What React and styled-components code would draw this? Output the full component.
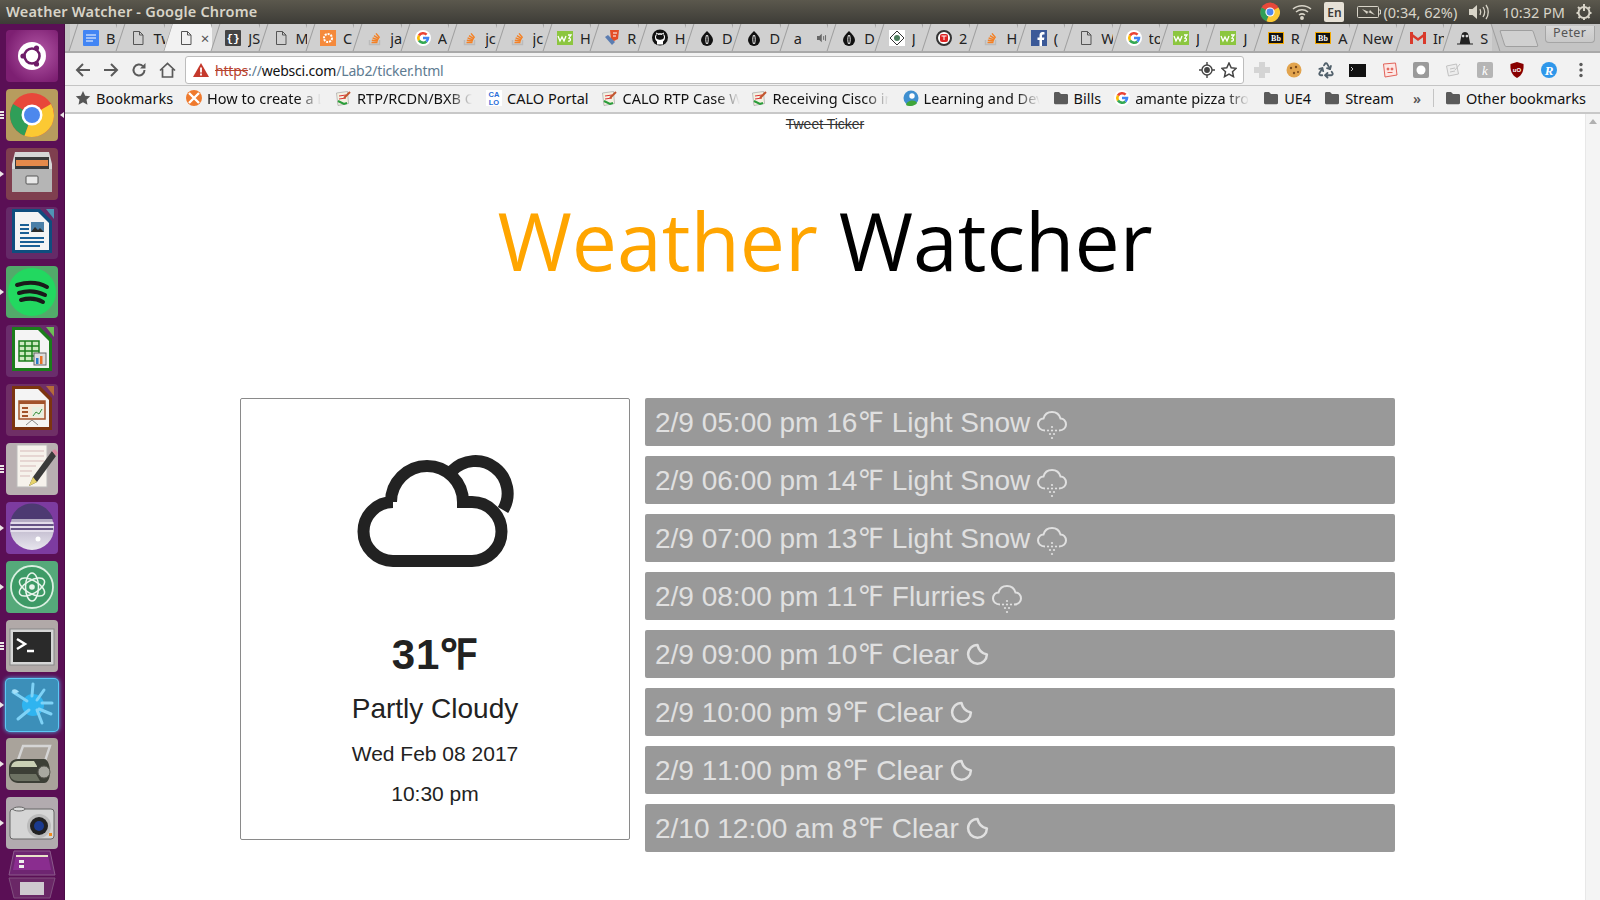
import React from 'react'
import styled, { createGlobalStyle, css } from 'styled-components'
import { Recycle } from 'lucide-react'

const GlobalStyle = createGlobalStyle`
  html, body { margin: 0; padding: 0; height: 100%; overflow: hidden; background: #fff; }
  #root { height: 100%; }
`

const Screen = styled.div`
  width: 1600px;
  height: 900px;
  display: flex;
  flex-direction: column;
  overflow: hidden;
  font-family: "Noto Sans", "Open Sans", sans-serif;
`

const TopBar = styled.div`
  height: 24px;
  flex: none;
  display: flex;
  align-items: center;
  justify-content: space-between;
  background: linear-gradient(#5b584d, #3d3c37);
  color: #d8d4c8;
  padding: 0 0 0 6px;
`

const WindowTitle = styled.div`
  font-size: 14.5px;
  font-weight: 600;
  letter-spacing: 0.2px;
  margin-top: -2px;
`

const Indicators = styled.div`
  display: flex;
  align-items: center;
  height: 24px;
  font-size: 14.5px;
  color: #d8d4c8;
`

const Indicator = styled.div`
  display: flex;
  align-items: center;
  justify-content: center;
  margin-left: ${p => p.$gap || 0}px;
  width: ${p => (p.$w ? p.$w + 'px' : 'auto')};
`

const LangBox = styled.div`
  width: 20px;
  height: 20px;
  background: #e6e1d6;
  color: #3c3b37;
  border-radius: 2px;
  font-size: 12px;
  font-weight: 600;
  display: flex;
  align-items: center;
  justify-content: center;
`

const Body = styled.div`
  flex: 1;
  display: flex;
  min-height: 0;
`

const Launcher = styled.div`
  width: 65px;
  flex: none;
  height: 876px;
  overflow: hidden;
  background: #5a0f55;
  border-right: 1px solid #4a0c46;
  box-sizing: border-box;
  padding: 6px 0 0 6px;
  display: flex;
  flex-direction: column;
  gap: 7px;
`

const Tile = styled.div`
  position: relative;
  width: 52px;
  height: 52px;
  flex: none;
  border-radius: 4px;
  background: ${p => p.$bg || 'transparent'};
  margin-top: ${p => (p.$lift ? '-6px' : '0')};
  ${p =>
    p.$glow &&
    css`
      box-shadow: 0 0 0 1px #5cc8f5, 0 0 4px 1px #4fb8ea;
    `}
  svg { display: block; }
`

const Pip = styled.span`
  position: absolute;
  left: -6px;
  top: 50%;
  width: 0;
  height: 0;
  margin-top: -3px;
  border-top: 3px solid transparent;
  border-bottom: 3px solid transparent;
  border-left: 4px solid #ece6e6;
`

const PipStack = styled.span`
  position: absolute;
  left: -6px;
  top: 50%;
  width: 4px;
  height: 8px;
  margin-top: -4px;
  background: repeating-linear-gradient(#ece6e6 0 2px, transparent 2px 3px);
`

const ActiveArrow = styled.span`
  position: absolute;
  right: -6px;
  top: 50%;
  width: 0;
  height: 0;
  margin-top: -3px;
  border-top: 3px solid transparent;
  border-bottom: 3px solid transparent;
  border-right: 4px solid #ece6e6;
`

const Browser = styled.div`
  flex: 1;
  min-width: 0;
  display: flex;
  flex-direction: column;
`

const TabStrip = styled.div`
  height: 29px;
  flex: none;
  display: flex;
  align-items: stretch;
  background: #c4c4c4;
  border-bottom: 2px solid #a9a9a9;
  box-sizing: border-box;
  padding-left: 5px;
  overflow: hidden;
`

const TabItem = styled.div`
  position: relative;
  width: 47.4px;
  flex: none;
  display: flex;
  align-items: center;
  gap: 7px;
  padding-left: 13px;
  box-sizing: border-box;
  background: #d0d0d0;
  overflow: visible;
  font-size: 14.5px;
  color: #222;
  white-space: nowrap;
  &::before, &::after {
    content: '';
    position: absolute;
    top: -2px;
    bottom: -2px;
    width: 1px;
    background: #9f9f9f;
  }
  &::before { left: 3px; transform: rotate(18deg); }
  &::after { right: -4px; transform: rotate(-18deg); }
`

const ActiveFill = styled.span`
  position: absolute;
  top: 0;
  bottom: -2px;
  left: -1px;
  right: -8px;
  background: #f2f2f2;
  clip-path: polygon(9px 0, calc(100% - 9px) 0, 100% 100%, 0 100%);
`

const TabLabel = styled.span`
  position: relative;
  width: ${p => p.$w || 16}px;
  overflow: hidden;
  flex: none;
`

const TabIcon = styled.span`
  position: relative;
  width: 16px;
  height: 16px;
  flex: none;
  display: flex;
  align-items: center;
  justify-content: center;
  font-size: 14px;
`

const CloseMark = styled.span`
  position: relative;
  font-size: 15px;
  color: #555;
`

const NewTab = styled.div`
  width: 32px;
  height: 15px;
  margin: 6px 0 0 10px;
  border: 1px solid #9f9f9f;
  border-radius: 2px;
  background: #d0d0d0;
  transform: skewX(18deg);
`

const ProfileButton = styled.div`
  margin: 2px 0 0 9px;
  width: 48px;
  height: 16px;
  border: 1px solid #a5a5a5;
  border-top: none;
  border-radius: 0 0 4px 4px;
  background: linear-gradient(#d8d8d8, #c8c8c8);
  font-size: 12.5px;
  letter-spacing: 0.4px;
  color: #555;
  text-align: center;
  line-height: 14px;
`

const Toolbar = styled.div`
  height: 32px;
  flex: none;
  display: flex;
  align-items: center;
  background: #f2f2f2;
  box-sizing: border-box;
  padding: 2px 0 0 4px;
`

const NavButton = styled.div`
  width: 28px;
  height: 28px;
  display: flex;
  align-items: center;
  justify-content: center;
`

const Omnibox = styled.div`
  width: 1059px;
  height: 28px;
  margin-left: 4px;
  box-sizing: border-box;
  flex: none;
  display: flex;
  align-items: center;
  background: #fff;
  border: 1px solid #bdbdbd;
  border-radius: 3px;
  padding: 0 3px 0 7px;
`

const UrlText = styled.div`
  flex: 1;
  margin-left: 6px;
  font-size: 14px;
  letter-spacing: -0.2px;
  color: #5e7b91;
  white-space: nowrap;
`

const Https = styled.span`
  color: #b8442f;
  text-decoration: line-through;
`

const Host = styled.span`
  color: #111;
`

const OmniIcon = styled.div`
  width: 22px;
  display: flex;
  justify-content: center;
`

const Extensions = styled.div`
  display: flex;
  margin-left: 2px;
`

const Extension = styled.div`
  width: 31.9px;
  height: 20px;
  flex: none;
  display: flex;
  align-items: center;
  justify-content: center;
`

const BookmarkBar = styled.div`
  height: 29px;
  flex: none;
  display: flex;
  align-items: center;
  background: #f1f1f1;
  border-top: 1px solid #c4c4c4;
  border-bottom: 2px solid #c8c8c8;
  box-sizing: border-box;
  padding: 0 0 2px 10px;
  font-size: 14.5px;
  color: #111;
  white-space: nowrap;
`

const Bookmark = styled.div`
  display: flex;
  align-items: center;
  gap: 5px;
  flex: none;
  margin-right: ${p => p.$after}px;
`

const BookmarkText = styled.span`
  ${p =>
    p.$fade &&
    css`
      width: ${p.$fade}px;
      overflow: hidden;
      -webkit-mask-image: linear-gradient(to right, #000 80%, transparent);
      mask-image: linear-gradient(to right, #000 80%, transparent);
    `}
`

const BarSeparator = styled.span`
  width: 1px;
  height: 18px;
  background: #c4c4c4;
  margin-right: 11px;
  flex: none;
`

const Overflow = styled.span`
  font-size: 14px;
  font-weight: 600;
  color: #555;
  margin-right: 12px;
`

const Viewport = styled.div`
  flex: 1;
  min-height: 0;
  display: flex;
  background: #fff;
`

const Page = styled.div`
  flex: 1;
  min-width: 0;
  display: flex;
  flex-direction: column;
`

const Scrollbar = styled.div`
  width: 15px;
  flex: none;
  background: #f4f4f4;
  border-left: 1px solid #e8e8e8;
  box-sizing: border-box;
  display: flex;
  justify-content: center;
  padding-top: 5px;
`

const ScrollArrow = styled.div`
  width: 0;
  height: 0;
  border-left: 4px solid transparent;
  border-right: 4px solid transparent;
  border-bottom: 5px solid #b0b0b0;
`

const Ticker = styled.div`
  text-align: center;
  font-family: "Liberation Sans", Arial, sans-serif;
  font-size: 14px;
  line-height: 18px;
  color: #333;
  text-decoration: line-through;
  margin-top: 1px;
`

const Title = styled.h1`
  margin: 52px 0 0;
  text-align: center;
  font-family: "Open Sans", "Noto Sans", sans-serif;
  font-weight: 400;
  font-size: 80.5px;
  line-height: 110px;
  color: #000;
`

const Orange = styled.span`
  color: #ffa500;
`

const Content = styled.div`
  display: grid;
  grid-template-columns: 390px 750px;
  gap: 15px;
  margin: 103px 0 0 175px;
`

const Card = styled.div`
  height: 442px;
  box-sizing: border-box;
  border: 1px solid #8a8a8a;
  border-radius: 2px;
  padding-top: 55px;
  display: flex;
  flex-direction: column;
  align-items: center;
  font-family: "Liberation Sans", Arial, sans-serif;
  color: #222;
`

const Temperature = styled.div`
  margin-top: 63px;
  font-size: 42px;
  line-height: 48px;
  font-weight: 700;
  letter-spacing: 1px;
`

const Summary = styled.div`
  margin-top: 13px;
  font-size: 28px;
  line-height: 34px;
`

const CardLine = styled.div`
  margin-top: ${p => p.$top}px;
  font-size: 21px;
  line-height: 26px;
`

const Forecast = styled.div`
  display: flex;
  flex-direction: column;
  gap: 10px;
`

const ForecastRow = styled.div`
  height: 48px;
  box-sizing: border-box;
  padding-left: 10px;
  display: flex;
  align-items: center;
  gap: 7px;
  background: #999;
  border-radius: 2px;
  color: #e0e0e0;
  font-family: "Liberation Sans", "DejaVu Sans", Arial, sans-serif;
  font-size: 28px;
  font-kerning: none;
`

const RowIcon = styled.svg`
  flex: none;
  margin-top: ${p => p.$drop}px;
`

const CloudSun = () => (
  <svg width="157" height="114" viewBox="0 0 157 114" fill="none" stroke="#222" strokeWidth="12">
    <path d="M36 107 A29.5 29.5 0 0 1 36 48 H34 A36 36 0 0 1 106 48 H115 A29.5 29.5 0 0 1 115 107 Z" />
    <path d="M95 17 A32.3 32.3 0 0 1 146 56" />
  </svg>
)

const SnowIcon = () => (
  <RowIcon $drop={8} width="30" height="30" viewBox="0 0 30 30" fill="none" stroke="#e0e0e0" strokeWidth="2">
    <path d="M8 19.500 C3.500 19.500 1 16.500 1 13.500 C1 10 3.500 7.500 6.500 7.500 C7.500 3.500 11 1 15 1 C19.500 1 22.500 4 23.500 7.500 C26.500 7.500 29 10 29 13.500 C29 16.500 26.500 19.500 22 19.500" />
    <g fill="#e0e0e0" stroke="none">
      {[[15, 16], [11, 19.5], [15, 19.5], [19, 19.5], [13, 23], [17, 23], [15, 27]].map(([x, y], i) => (
        <circle key={i} cx={x} cy={y} r="1.1" />
      ))}
    </g>
  </RowIcon>
)

const MoonIcon = () => (
  <RowIcon $drop={-2} width="23" height="23" viewBox="0 0 22 22" fill="none" stroke="#e0e0e0" strokeWidth="2.4">
    <path d="M11 2.800 A9 9 0 1 0 20 12 A12 12 0 0 1 11 2.800 Z" strokeLinejoin="round" />
  </RowIcon>
)

const forecast = [
  ['2/9 05:00 pm 16℉ Light Snow', 'snow'],
  ['2/9 06:00 pm 14℉ Light Snow', 'snow'],
  ['2/9 07:00 pm 13℉ Light Snow', 'snow'],
  ['2/9 08:00 pm 11℉ Flurries', 'snow'],
  ['2/9 09:00 pm 10℉ Clear', 'moon'],
  ['2/9 10:00 pm 9℉ Clear', 'moon'],
  ['2/9 11:00 pm 8℉ Clear', 'moon'],
  ['2/10 12:00 am 8℉ Clear', 'moon'],
]

/* favicons */
const Doc = ({ c = '#555' }) => (
  <svg width="14" height="16" viewBox="0 0 14 16" fill="none" stroke={c} strokeWidth="1">
    <path d="M2.5 1.5 H8.5 L12 5 V14.5 H2.5 Z M8.5 1.5 V5 H12" />
  </svg>
)
const Docs = () => (
  <svg width="16" height="16"><rect width="16" height="16" x="0" rx="1" fill="#4285f4" /><path d="M3 5h10M3 8h10M3 11h7" stroke="#fff" /></svg>
)
const Braces = () => (
  <svg width="16" height="16"><rect width="16" height="16" rx="1" fill="#444" /><text x="8" y="12" fontSize="11" fontWeight="700" textAnchor="middle" fill="#fff" fontFamily="Liberation Mono">{'{}'}</text></svg>
)
const Orangey = () => (
  <svg width="16" height="16"><rect width="16" height="16" fill="#f58a3c" /><circle cx="8" cy="8" r="4" fill="none" stroke="#fff" strokeWidth="2" strokeDasharray="2 1" /></svg>
)
const Stack = () => (
  <svg width="16" height="16" fill="none" stroke="#f48024" strokeWidth="1.4">
    <path d="M2.5 10v4.5h10V10" stroke="#bbb" />
    <path d="M4.5 12.5h6M4.8 10.2l6 .8M5.6 7.8l5.6 2.2M7 5.6l5 3.2M9 3.4l3.6 4.4" />
  </svg>
)
const Goog = () => (
  <svg width="16" height="16" viewBox="0 0 16 16" fill="none" strokeWidth="2.6">
    <circle cx="8" cy="8" r="8" fill="#fff" />
    <path d="M11.6 4.6A5 5 0 0 0 4 5.5" stroke="#ea4335" />
    <path d="M4 5.5a5 5 0 0 0 0 5" stroke="#fbbc05" />
    <path d="M4 10.5a5 5 0 0 0 7.4 1" stroke="#34a853" />
    <path d="M11.4 11.5A5 5 0 0 0 13 8H8" stroke="#4285f4" />
  </svg>
)
const W3 = () => (
  <svg width="17" height="14" viewBox="0 0 16 14"><rect width="16" height="14" fill="#8cc63f" /><path d="M1 5l2 5 2-4 2 4 2-5M11 4h3l-2 3c2 0 2 4-1 3" fill="none" stroke="#fff" strokeWidth="1.3" /></svg>
)
const Html5 = () => (
  <svg width="16" height="16"><path d="M6 0h9l-1 9-4 2-3-1z" fill="#e44d26" /><path d="M9 3h4M9 6h3" stroke="#fff" /><path d="M1 7l3-2 7 7-3 3z" fill="#5b7db1" /></svg>
)
const Github = () => (
  <svg width="17" height="17" viewBox="0 0 16 16"><circle cx="8" cy="8" r="8" fill="#111" /><path d="M5 15v-3c-1-1-2-2-2-4 0-1 0-2 1-3V3l2 1c1-.3 3-.3 4 0l2-1v2c1 1 1 2 1 3 0 2-1 3-2 4v3z" fill="#fff" /><path d="M4.5 4l2 1.4c1-.3 2-.3 3 0L11.500 4v2c.8 1 .6 2.700-.4 3.500-.8.600-2 .7-3.100.7s-2.300-.1-3.100-.7c-1-.8-1.200-2.500-.4-3.500z" fill="#111" /></svg>
)
const Egg = () => (
  <svg width="14" height="16" viewBox="0 0 14 16"><path d="M7 1 C10 4 13 7 13 10 A6 6 0 0 1 1 10 C1 7 4 4 7 1 Z" fill="#111" /><path d="M6.500 5 C5.500 8 5.500 11 6.500 14 M7.500 5 C8.500 8 8.500 11 7.500 14" stroke="#fff" strokeWidth="0.9" fill="none" /></svg>
)
const Speaker = () => (
  <svg width="12" height="10" viewBox="0 0 12 10" fill="#666"><path d="M0 3h2.500L5 .5v9L2.500 7H0z" /><path d="M7 3v4M9 2v6" stroke="#666" fill="none" /></svg>
)
const Diamond = () => (
  <svg width="16" height="16"><rect width="16" height="16" fill="#fff" /><path d="M8 1l7 7-7 7-7-7z" fill="none" stroke="#333" /><circle cx="8" cy="8" r="3" fill="#4d7f5f" /></svg>
)
const TT = () => (
  <svg width="16" height="16"><circle cx="8" cy="8" r="7" fill="#fff" stroke="#333" strokeWidth="2" /><rect x="4" y="4" width="8" height="8" rx="2" fill="#d22" /><path d="M5.500 6h5M8 6v4" stroke="#fff" /></svg>
)
const Fb = () => (
  <svg width="16" height="16"><rect width="16" height="16" fill="#3b5998" /><path d="M11 16V10h2l.4-2.500H11V6c0-1 .4-1.500 1.500-1.500h1V2.200C13 2 12 2 11.500 2 9.500 2 8.500 3.200 8.500 5.500v2h-2V10h2v6z" fill="#fff" /></svg>
)
const Bb = () => (
  <svg width="16" height="12"><rect width="16" height="12" fill="#f2a900" /><rect x="1" y="1" width="14" height="10" fill="#111" /><text x="8" y="9" fontSize="8" fontWeight="700" textAnchor="middle" fill="#fff" fontFamily="Liberation Serif">Bb</text></svg>
)
const Gmail = () => (
  <svg width="16" height="13" viewBox="0 0 16 13"><path d="M0 1h3v12H0zM13 1h3v12h-3z" fill="#d93a2b" /><path d="M0 1l8 6 8-6v3L8 10 0 4z" fill="#d93a2b" /></svg>
)
const Robot = () => (
  <svg width="17" height="15" viewBox="0 0 17 15"><path d="M3 14L5 4c1-3 6-3 7 0l2 10h3v1H0v-1z" fill="#222" /><circle cx="6.500" cy="6" r="1.400" fill="#ddd" /><circle cx="10.500" cy="6" r="1.400" fill="#ddd" /></svg>
)

const tabs = [
  [Docs, 'B'], [Doc, 'Tw'], [Doc, '', true], [Braces, 'JS'], [Doc, 'M'], [Orangey, 'C'], [Stack, 'ja'], [Goog, 'A'],
  [Stack, 'jc'], [Stack, 'jc'], [W3, 'H'], [Html5, 'R'], [Github, 'H'], [Egg, 'D'], [Egg, 'D'], [null, 'a'],
  [Egg, 'D'], [Diamond, 'J'], [TT, '2'], [Stack, 'H'], [Fb, '('], [Doc, 'W'], [Goog, 'to'], [W3, 'J'], [W3, 'J'],
  [Bb, 'R'], [Bb, 'A'], [null, 'New'], [Gmail, 'In'], [Robot, 'S'],
]

/* bookmark icons */
const Star = ({ c = '#555', hollow }) => (
  <svg width="16" height="16" viewBox="0 0 16 16" fill={hollow ? 'none' : c} stroke={c} strokeWidth={hollow ? 1.5 : 0}>
    <path d="M8 1l2.200 4.700 5 .6-3.700 3.400 1 5L8 12.200 3.500 14.700l1-5L.8 6.300l5-.6z" />
  </svg>
)
const Folder = () => (
  <svg width="16" height="14" viewBox="0 0 16 14" fill="#5a5a5a"><path d="M1 2.500C1 1.700 1.500 1 2.300 1H6l2 2h5.700c.8 0 1.300.6 1.300 1.300V12c0 .7-.5 1.200-1.300 1.200H2.300C1.500 13.200 1 12.700 1 12z" /></svg>
)
const Compass = () => (
  <svg width="16" height="16" viewBox="0 0 16 16"><circle cx="8" cy="8" r="8" fill="#ef7a2e" /><path d="M3 3l10 10M13 3L3 13" stroke="#fff" strokeWidth="2.400" /></svg>
)
const Checklist = () => (
  <svg width="17" height="17" viewBox="0 0 17 17"><path d="M1.500 3l11-1.500 1 12-10.500 2z" fill="#f4f1e2" stroke="#999" strokeWidth=".6" /><path d="M4 6l7-1M4 9l7-1" stroke="#d33" /><path d="M3 11l6 3 3-1" stroke="#2a9d3a" strokeWidth="2" fill="none" /><path d="M9 8l6-6" stroke="#c2552d" strokeWidth="2" /></svg>
)
const Calo = () => (
  <svg width="16" height="16"><rect width="16" height="16" fill="#fff" /><text x="8" y="7" fontSize="7.500" fontWeight="700" textAnchor="middle" fill="#2a6dd8" fontFamily="Liberation Sans">CA</text><text x="8" y="15" fontSize="7.500" fontWeight="700" textAnchor="middle" fill="#2a6dd8" fontFamily="Liberation Sans">LO</text></svg>
)
const Learn = () => (
  <svg width="16" height="16" viewBox="0 0 16 16"><circle cx="8" cy="8" r="7.500" fill="#3f8fd0" /><circle cx="9" cy="6" r="2.700" fill="#fff" /><path d="M3 15c1-5 9-6 11-2-2 3-8 4-11 2z" fill="#3fa53a" /></svg>
)

const bookmarks = [
  { icon: <Star />, label: 'Bookmarks', after: 13 },
  { icon: <Compass />, label: 'How to create a Link', fade: 114, after: 14 },
  { icon: <Checklist />, label: 'RTP/RCDN/BXB Cisco', fade: 115, after: 14 },
  { icon: <Calo />, label: 'CALO Portal', after: 12 },
  { icon: <Checklist />, label: 'CALO RTP Case Work', fade: 117, after: 11 },
  { icon: <Checklist />, label: 'Receiving Cisco in', fade: 116, after: 14 },
  { icon: <Learn />, label: 'Learning and Development', fade: 116, after: 13 },
  { icon: <Folder />, label: 'Bills', after: 13 },
  { icon: <Goog />, label: 'amante pizza troy', fade: 114, after: 14 },
  { icon: <Folder />, label: 'UE4', after: 13 },
  { icon: <Folder />, label: 'Stream', after: 19 },
]

/* toolbar */
const Back = ({ flip }) => (
  <svg width="16" height="16" viewBox="0 0 16 16" fill="none" stroke="#5a5a5a" strokeWidth="2" style={flip ? { transform: 'scaleX(-1)' } : undefined}>
    <path d="M15 8H2M8 2L2 8l6 6" />
  </svg>
)
const Reload = () => (
  <svg width="16" height="16" viewBox="0 0 16 16" fill="none" stroke="#5a5a5a" strokeWidth="2">
    <path d="M13.500 8a5.500 5.500 0 1 1-1.600-3.900" />
    <path d="M14.500 1v5.500H9" fill="#5a5a5a" stroke="none" />
  </svg>
)
const Home = () => (
  <svg width="17" height="16" viewBox="0 0 17 16" fill="none" stroke="#5a5a5a" strokeWidth="1.700">
    <path d="M1 8.500L8.500 1.500 16 8.500M3.500 7v8h10V7" />
  </svg>
)
const Warn = () => (
  <svg width="16" height="14" viewBox="0 0 16 14"><path d="M8 0l8 14H0z" fill="#c5392c" /><path d="M8 4.500v5M8 10.500v2" stroke="#fff" strokeWidth="1.800" /></svg>
)
const Target = () => (
  <svg width="16" height="16" viewBox="0 0 16 16" fill="none" stroke="#444" strokeWidth="1.400"><circle cx="8" cy="8" r="5" /><circle cx="8" cy="8" r="2.200" fill="#444" /><path d="M8 0v3M8 13v3M0 8h3M13 8h3" /></svg>
)

const extensions = [
  <svg width="16" height="16" key="a" fill="#d4d4d4"><path d="M5 0h6v5h5v6h-5v5H5v-5H0V5h5z" /></svg>,
  <svg width="16" height="16" key="b"><circle cx="8" cy="8" r="7.500" fill="#e2a44e" /><circle cx="5" cy="6" r="1.200" fill="#7a4a1c" /><circle cx="10" cy="5" r="1.200" fill="#7a4a1c" /><circle cx="8" cy="11" r="1.200" fill="#7a4a1c" /><circle cx="12" cy="10" r="1" fill="#7a4a1c" /></svg>,
  <Recycle key="c" size={18} color="#51606b" strokeWidth={2.4} />,
  <svg width="17" height="13" key="d"><rect width="17" height="13" fill="#111" /><path d="M2 3l2 2-2 2" stroke="#ccc" fill="none" /></svg>,
  <svg width="16" height="16" key="e" fill="#fde7e4" stroke="#e2635a"><path d="M1.500 2l12-1 1.500 12-12 2z" /><circle cx="6" cy="7" r="1" fill="#e2635a" /><circle cx="10" cy="7" r="1" fill="#e2635a" /><path d="M5.500 10.500h5" /></svg>,
  <svg width="16" height="16" key="f"><rect width="16" height="16" rx="2" fill="#9a9a9a" /><circle cx="8" cy="8" r="4.500" fill="#fff" /></svg>,
  <svg width="16" height="16" key="g" fill="#ededed" stroke="#c2c2c2"><path d="M1.500 4l10-2 2 10-10 2z" /><path d="M5 7l5-1M5 10l5-1M10 8l5-6" /></svg>,
  <svg width="16" height="16" key="h"><rect width="16" height="16" rx="2" fill="#b5b5b5" /><text x="8" y="13" fontSize="13" fontStyle="italic" textAnchor="middle" fill="#fff" fontFamily="Liberation Serif">k</text></svg>,
  <svg width="16" height="16" key="i"><path d="M1.500 2L8 0l6.500 2c.5 6-1 11-6.500 14C2.500 13 1 8 1.500 2z" fill="#800" /><text x="8" y="10" fontSize="6" fontWeight="700" textAnchor="middle" fill="#fff" fontFamily="Liberation Sans">uO</text></svg>,
  <svg width="16" height="16" key="j"><circle cx="8" cy="8" r="8" fill="#2f97ea" /><text x="8" y="13" fontSize="13" fontStyle="italic" fontWeight="700" textAnchor="middle" fill="#fff" fontFamily="Liberation Serif">R</text></svg>,
  <svg width="4" height="16" key="k" fill="#5a5a5a"><circle cx="2" cy="2.500" r="1.700" /><circle cx="2" cy="8" r="1.700" /><circle cx="2" cy="13.500" r="1.700" /></svg>,
]

/* launcher icons, all drawn in a 52 box */
const L = ({ children }) => <svg width="52" height="52" viewBox="0 0 52 52">{children}</svg>

const launcherIcons = [
  { bg: 'radial-gradient(circle at 60% 45%, #b55aa8, #7d1f72 75%)', icon: <L><circle cx="26" cy="26" r="14" fill="#fff" /><circle cx="26" cy="26" r="7.500" fill="none" stroke="#6e1c68" strokeWidth="2.600" /><circle cx="17" cy="26" r="2.600" fill="#6e1c68" /><circle cx="30.500" cy="18" r="2.600" fill="#6e1c68" /><circle cx="30.500" cy="34" r="2.600" fill="#6e1c68" /></L> },
  { bg: '#b79c5e', icon: <L><circle cx="26" cy="26" r="22" fill="#e8483a" /><path d="M26 26L7 15A22 22 0 0 0 18.500 46.700z" fill="#2f9e58" /><path d="M26 26L18.500 46.700A22 22 0 0 0 45 15z" fill="#fbc933" /><circle cx="26" cy="26" r="10.500" fill="#fff" /><circle cx="26" cy="26" r="8" fill="#4d88ed" /></L>, mark: 'stack', arrow: true },
  { bg: '#7f3f4f', icon: <L><path d="M9 4h34l3 12v28H6V16z" fill="#d6d6d6" /><rect x="9" y="9" width="34" height="14" fill="#3a3a3a" /><rect x="10" y="12" width="32" height="6" fill="#e58a4b" /><path d="M6 21h40v23H6z" fill="#b5b5b5" /><rect x="20" y="28" width="12" height="8" rx="1" fill="#e8e8e8" stroke="#555" /></L>, mark: 'pip' },
  { bg: '#652a68', icon: <L><path d="M6 2h28l12 12v32H6z" fill="#0f4d7e" /><path d="M40 2l8 0v10z" fill="#4f93b5" /><path d="M9 5h23l11 11v27H9z" fill="#f4f4f4" /><path d="M14 18h9M14 22h9M14 26h9M14 31h24M14 35h24M14 39h20" stroke="#1a5f95" strokeWidth="2" /><rect x="25" y="15" width="13" height="10" fill="#4a7fa8" /><path d="M25 25l4-5 3 3 2-2 4 4z" fill="#2c2c2c" /></L> },
  { bg: '#52aa6a', icon: <L><circle cx="26" cy="26" r="24" fill="#22d860" /><path d="M11 19c10-3 21-3 30 2M13 27c9-3 18-2 26 2M15 34c7-2 15-2 22 2" fill="none" stroke="#1a1a1a" strokeWidth="4" strokeLinecap="round" /></L>, mark: 'pip' },
  { bg: '#6a2d6c', icon: <L><path d="M6 2h28l12 12v32H6z" fill="#1b7d1b" /><path d="M40 2l8 0v10z" fill="#6cbf55" /><path d="M9 5h23l11 11v27H9z" fill="#f4f4f4" /><path d="M13 16h20v20H13zM13 21h20M13 26h20M13 31h20M19 16v20M26 16v20" fill="#cdeac0" stroke="#1b7d1b" strokeWidth="1.500" /><rect x="28" y="28" width="12" height="12" fill="#ddd" stroke="#666" /><rect x="30" y="33" width="2.500" height="6" fill="#2a7ac8" /><rect x="34" y="31" width="2.500" height="8" fill="#e5732a" /></L> },
  { bg: '#6f2f66', icon: <L><path d="M6 2h28l12 12v32H6z" fill="#7c3410" /><path d="M40 2l8 0v10z" fill="#b56a3a" /><path d="M9 5h23l11 11v27H9z" fill="#f4f4f4" /><rect x="13" y="17" width="26" height="18" fill="#f7e8d8" stroke="#a2522a" strokeWidth="1.500" /><rect x="13" y="17" width="26" height="3" fill="#a2522a" /><path d="M16 24h6M16 28h6M16 32h6" stroke="#a2522a" strokeWidth="2" /><rect x="26" y="23" width="11" height="10" fill="#e7efe0" /><path d="M27 32l3-4 3 2 3-5" stroke="#3a8f3a" fill="none" /><path d="M20 41l6-5 6 5" stroke="#888" fill="none" /></L> },
  { bg: '#b8afb1', icon: <L><rect x="11" y="2" width="30" height="42" fill="#f6f2ec" stroke="#bbb" /><path d="M14 8h24M14 13h24M14 18h24M14 23h16M14 28h12M14 33h10" stroke="#d6b9b9" /><path d="M46 8L27 34l-4 9 8-4L50 13z" fill="#3a3a3a" /><path d="M27 34l-4 9 8-4z" fill="#e6d26a" /><path d="M46 8l4 5 2-3-3-4z" fill="#d98aa0" /></L>, mark: 'stack' },
  { bg: '#7d3ba0', icon: <L><defs><linearGradient id="ecl" x1="0" y1="0" x2="0" y2="1"><stop offset="0" stopColor="#9a8fae" /><stop offset="1" stopColor="#e8e6ee" /></linearGradient></defs><circle cx="26" cy="26" r="22" fill="url(#ecl)" /><path d="M5 17h42a22 22 0 0 0-42 0z" fill="#4d3a72" /><path d="M4.500 21h43M4 25h44M4.500 29h43" stroke="#efeaf5" strokeWidth="1.600" /><path d="M4.500 23h43M5 27h42" stroke="#4a3570" strokeWidth="1.600" /><circle cx="32" cy="37" r="2.500" fill="#fff" /></L>, mark: 'pip' },
  { bg: '#55a97a', icon: <L><circle cx="26" cy="26" r="21" fill="#3d9a66" stroke="#d8efe0" strokeWidth="1.800" /><g fill="none" stroke="#e8f5ec" strokeWidth="1.500"><ellipse cx="26" cy="26" rx="14" ry="6.500" transform="rotate(30 26 26)" /><ellipse cx="26" cy="26" rx="14" ry="6.500" transform="rotate(-30 26 26)" /><ellipse cx="26" cy="26" rx="14" ry="6.500" transform="rotate(90 26 26)" /></g><circle cx="26" cy="26" r="2.800" fill="#e8f5ec" /></L>, mark: 'pip' },
  { bg: '#b1a9a8', icon: <L><rect x="4" y="9" width="44" height="36" fill="#d6d6d6" stroke="#888" /><rect x="7" y="12" width="38" height="30" fill="#2a2a2a" /><path d="M11 19l8 5-8 5" fill="none" stroke="#fff" strokeWidth="2.500" /><path d="M21 31h7" stroke="#fff" strokeWidth="2.500" /></L>, mark: 'stack' },
  { bg: '#3c8fb9', glow: true, icon: <L><circle cx="27" cy="26" r="11" fill="#2fb4f0" /><g stroke="#7fd2f6" strokeWidth="3" strokeLinecap="round"><path d="M7 13l14 9M12 40l11-9M38 11l-7 10M45 35l-12-5M27 5l-1 12M46 24h-10M36 44l-5-13" /></g><path d="M6 11c3-2 6 0 7 2l-5 2z" fill="#a5e0f8" /></L>, mark: 'pip' },
  { bg: '#a9a39b', icon: <L><path d="M36 32L44 8H17L12 22" fill="none" stroke="#d5d5d5" strokeWidth="2.400" /><path d="M3 30c0-6 4-9 9-9h26c4 0 6 7 6 13s-2 11-6 11H12c-5 0-9-4-9-9z" fill="#3c3f36" /><path d="M5 30c0-4 3-7 7-7h16l3 5v1H5z" fill="#c9cfb4" /><path d="M4 36h26l4 7H12c-5 0-8-3-8-7z" fill="#6d7263" /><circle cx="38" cy="34" r="6" fill="#a8a8a0" stroke="#5a5a52" /></L>, mark: 'pip' },
  { bg: '#b2abaf', icon: <L><rect x="4" y="12" width="44" height="30" rx="3" fill="#d5d5d5" stroke="#666" /><ellipse cx="13" cy="12" rx="6" ry="2" fill="#ddd" stroke="#666" /><circle cx="33" cy="29" r="12" fill="#bbb" /><circle cx="33" cy="29" r="9" fill="#222" /><circle cx="33" cy="29" r="5" fill="#1a3a8f" /><rect x="43" y="36" width="3" height="3" fill="#f08a1f" /></L>, mark: 'pip' },
  { bg: 'transparent', lift: true, icon: <L><path d="M8 1h36l5 24H3z" fill="#6e2571" stroke="#8b5a8b" /><path d="M10 5h32l3 15H7z" fill="#8a2d8f" /><path d="M10 5h32v2H10z" fill="#e9e3c9" /><rect x="13" y="10" width="5" height="3" fill="#eee" /><rect x="13" y="15" width="5" height="3" fill="#eee" /><path d="M3 28h46l-5 20H8z" fill="#6a2766" stroke="#80517f" /><rect x="14" y="32" width="24" height="13" fill="#cfc9cf" /></L> },
]

const App = () => (
  <>
    <GlobalStyle />
    <Screen>
      <TopBar>
        <WindowTitle>Weather Watcher - Google Chrome</WindowTitle>
        <Indicators>
          <Indicator>
            <svg width="20" height="20" viewBox="0 0 52 52"><circle cx="26" cy="26" r="25" fill="#e8483a" /><path d="M26 26L4 14A25 25 0 0 0 17 50z" fill="#2f9e58" /><path d="M26 26L17 50A25 25 0 0 0 48 14z" fill="#fbc933" /><circle cx="26" cy="26" r="12" fill="#fff" /><circle cx="26" cy="26" r="9" fill="#4d88ed" /></svg>
          </Indicator>
          <Indicator $gap={12}>
            <svg width="20" height="16" viewBox="0 0 20 16" fill="none" stroke="#d8d4c8" strokeWidth="1.500"><path d="M1 5c5-4.500 13-4.500 18 0M4 8c3.500-3 8.500-3 12 0M7 11c2-1.500 4-1.500 6 0" /><circle cx="10" cy="14" r="1.200" fill="#d8d4c8" /></svg>
          </Indicator>
          <Indicator $gap={12}><LangBox>En</LangBox></Indicator>
          <Indicator $gap={13}>
            <svg width="24" height="12" viewBox="0 0 24 12" fill="none" stroke="#d8d4c8"><rect x=".5" y=".5" width="21" height="11" rx="1" /><path d="M22 4h1.500v4H22" /><path d="M5 3l7 3 1-2 5 5-7-3-1 2z" fill="#d8d4c8" stroke="none" /></svg>
          </Indicator>
          <Indicator $gap={2}>(0:34, 62%)</Indicator>
          <Indicator $gap={12}>
            <svg width="20" height="16" viewBox="0 0 20 16" fill="none" stroke="#d8d4c8" strokeWidth="1.300"><path d="M0 5h3.500L8 1v14l-4.500-4H0z" fill="#d8d4c8" stroke="none" /><path d="M11 5c1 2 1 4 0 6M14 3c2 3 2 7 0 10M17 1c3 4 3 10 0 14" /></svg>
          </Indicator>
          <Indicator $gap={13}>10:32 PM</Indicator>
          <Indicator $gap={3} $w={32}>
            <svg width="18" height="18" viewBox="0 0 18 18" fill="none" stroke="#d8d4c8" strokeWidth="2"><circle cx="9" cy="9.500" r="5.500" /><path d="M9 1v7M9 14v3M3 4l1.500 1.500M15 4l-1.500 1.500M1.500 10h2M14.500 10h2M3.500 15l1.500-1.500M14.500 15L13 13.500" /></svg>
          </Indicator>
        </Indicators>
      </TopBar>
      <Body>
        <Launcher>
          {launcherIcons.map((t, i) => (
            <Tile key={i} $bg={t.bg} $glow={t.glow} $lift={t.lift}>
              {t.icon}
              {t.mark === 'pip' && <Pip />}
              {t.mark === 'stack' && <PipStack />}
              {t.arrow && <ActiveArrow />}
            </Tile>
          ))}
        </Launcher>
        <Browser>
          <TabStrip>
            {tabs.map(([Icon, label, active], i) => (
              <TabItem key={i}>
                {active && <ActiveFill />}
                {Icon && <TabIcon><Icon /></TabIcon>}
                {active ? (
                  <CloseMark>×</CloseMark>
                ) : Icon ? (
                  <TabLabel>{label}</TabLabel>
                ) : label === 'a' ? (
                  <>
                    <TabLabel>{label}</TabLabel>
                    <Speaker />
                  </>
                ) : (
                  <TabLabel $w={30}>{label}</TabLabel>
                )}
              </TabItem>
            ))}
            <NewTab />
            <ProfileButton>Peter</ProfileButton>
          </TabStrip>
          <Toolbar>
            <NavButton><Back /></NavButton>
            <NavButton><Back flip /></NavButton>
            <NavButton><Reload /></NavButton>
            <NavButton><Home /></NavButton>
            <Omnibox>
              <Warn />
              <UrlText>
                <Https>https</Https>://<Host>websci.com</Host>/Lab2/ticker.html
              </UrlText>
              <OmniIcon><Target /></OmniIcon>
              <OmniIcon><Star hollow c="#444" /></OmniIcon>
            </Omnibox>
            <Extensions>
              {extensions.map(e => (
                <Extension key={e.key}>{e}</Extension>
              ))}
            </Extensions>
          </Toolbar>
          <BookmarkBar>
            {bookmarks.map(b => (
              <Bookmark key={b.label} $after={b.after}>
                {b.icon}
                <BookmarkText $fade={b.fade}>{b.label}</BookmarkText>
              </Bookmark>
            ))}
            <Overflow>»</Overflow>
            <BarSeparator />
            <Bookmark $after={0}>
              <Folder />
              <BookmarkText>Other bookmarks</BookmarkText>
            </Bookmark>
          </BookmarkBar>
          <Viewport>
            <Page>
              <Ticker>Tweet Ticker</Ticker>
              <Title>
                <Orange>Weather</Orange> Watcher
              </Title>
              <Content>
                <Card>
                  <CloudSun />
                  <Temperature>31℉</Temperature>
                  <Summary>Partly Cloudy</Summary>
                  <CardLine $top={15}>Wed Feb 08 2017</CardLine>
                  <CardLine $top={14}>10:30 pm</CardLine>
                </Card>
                <Forecast>
                  {forecast.map(([text, kind]) => (
                    <ForecastRow key={text}>
                      <span>{text}</span>
                      {kind === 'snow' ? <SnowIcon /> : <MoonIcon />}
                    </ForecastRow>
                  ))}
                </Forecast>
              </Content>
            </Page>
            <Scrollbar><ScrollArrow /></Scrollbar>
          </Viewport>
        </Browser>
      </Body>
    </Screen>
  </>
)

export default App
